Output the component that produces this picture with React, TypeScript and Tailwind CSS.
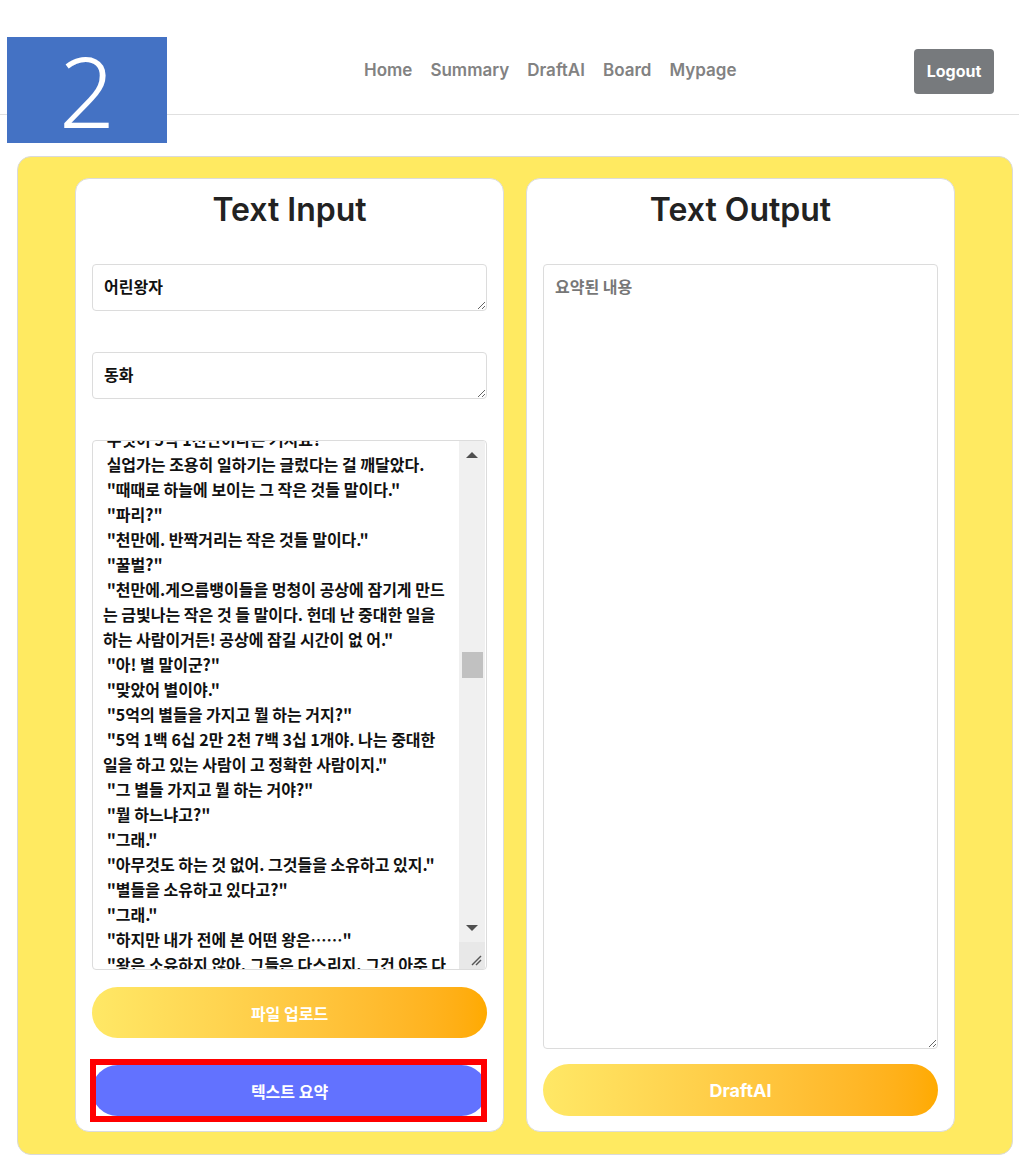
import React from "react";

const lines: string[] = [
  " 무엇이 5억 1천만이라는 거지요?\"",
  " 실업가는 조용히 일하기는 글렀다는 걸 깨달았다.",
  " \"때때로 하늘에 보이는 그 작은 것들 말이다.\"",
  " \"파리?\"",
  " \"천만에. 반짝거리는 작은 것들 말이다.\"",
  " \"꿀벌?\"",
  " \"천만에.게으름뱅이들을 멍청이 공상에 잠기게 만드",
  "는 금빛나는 작은 것 들 말이다. 헌데 난 중대한 일을",
  "하는 사람이거든! 공상에 잠길 시간이 없 어.\"",
  " \"아! 별 말이군?\"",
  " \"맞았어 별이야.\"",
  " \"5억의 별들을 가지고 뭘 하는 거지?\"",
  " \"5억 1백 6십 2만 2천 7백 3십 1개야. 나는 중대한",
  "일을 하고 있는 사람이 고 정확한 사람이지.\"",
  " \"그 별들 가지고 뭘 하는 거야?\"",
  " \"뭘 하느냐고?\"",
  " \"그래.\"",
  " \"아무것도 하는 것 없어. 그것들을 소유하고 있지.\"",
  " \"별들을 소유하고 있다고?\"",
  " \"그래.\"",
  " \"하지만 내가 전에 본 어떤 왕은……\"",
  " \"왕은 소유하지 않아. 그들은 다스리지. 그건 아주 다",
];

function Grip() {
  return (
    <svg width="12" height="12" viewBox="0 0 12 12" className="block">
      <path d="M2 11 L11 2" stroke="#555" strokeWidth="1.4" />
      <path d="M6 11 L11 6" stroke="#555" strokeWidth="1.4" />
    </svg>
  );
}

export default function App() {
  const kr = "font-['Noto_Sans_CJK_KR','Noto_Sans',sans-serif]";
  return (
    <div className="relative min-h-[1162px] w-[1019px] bg-white font-['Inter','Noto_Sans_CJK_KR',sans-serif]">
      <header className="flex h-[115px] items-center border-b border-[#e0e0e0] pt-[27px]">
        <nav className="ml-[364px] flex gap-[18px] text-[17px] font-semibold text-[#828282]">
          <span>Home</span>
          <span>Summary</span>
          <span>DraftAI</span>
          <span>Board</span>
          <span>Mypage</span>
        </nav>
        <button className="ml-auto mr-[25px] mt-[1px] h-[45px] w-[80px] rounded-[4px] bg-[#777a7d] text-[16px] font-bold text-white">
          Logout
        </button>
      </header>

      <div className="absolute left-[7px] top-[37px] flex h-[106px] w-[160px] items-center justify-center bg-[#4472C4] font-['Noto_Sans',sans-serif] text-[98px] font-light leading-none text-white">
        2
      </div>

      <main className="ml-[17px] mt-[41px] flex w-[996px] justify-center gap-[22px] rounded-[14px] border border-[#dadada] bg-[#FFEA61] pb-[22px] pt-[21px]">
        {/* Left card */}
        <section className="flex w-[429px] flex-col rounded-[14px] border border-[#dcdcdc] bg-white px-[16px] pb-[15px] pt-[11px]">
          <h2 className="h-[40px] text-center text-[32px] font-semibold leading-[40px] text-[#222]">Text Input</h2>
          <textarea
            readOnly
            value="어린왕자"
            className={`mt-[34px] h-[47px] w-full rounded-[4px] border border-[#dcdcdc] px-[11px] py-[10px] text-[16px] font-bold leading-[22px] text-[#111] outline-none ${kr}`}
          />
          <textarea
            readOnly
            value="동화"
            className={`mt-[41px] h-[47px] w-full rounded-[4px] border border-[#dcdcdc] px-[11px] py-[10px] text-[16px] font-bold leading-[22px] text-[#111] outline-none ${kr}`}
          />
          <div className="mt-[41px] flex h-[530px] w-full overflow-hidden rounded-[4px] border border-[#dcdcdc] pr-[1px]">
            <div className={`min-w-0 flex-1 overflow-hidden pl-[10px] text-[16px] font-bold leading-[25px] text-[#111] ${kr}`}>
              <div className="-mt-[14px]">
                {lines.map((l, i) => (
                  <div key={i} className="whitespace-pre">
                    {l}
                  </div>
                ))}
              </div>
            </div>
            <div className="flex w-[26px] flex-col bg-[#f0f0f0]">
              <div className="flex h-[28px] items-center justify-center">
                <div className="h-0 w-0 border-x-[6px] border-b-[6px] border-x-transparent border-b-[#505050]" />
              </div>
              <div className="flex-1">
                <div className="mx-auto mt-[183px] h-[26px] w-[21px] bg-[#c1c1c1]" />
              </div>
              <div className="flex h-[28px] items-center justify-center">
                <div className="h-0 w-0 border-x-[6px] border-t-[6px] border-x-transparent border-t-[#505050]" />
              </div>
              <div className="flex h-[27px] items-end justify-end bg-[#e8e8e8] pb-[3px] pr-[3px]">
                <Grip />
              </div>
            </div>
          </div>
          <button className={`mt-[17px] h-[51px] w-full rounded-full bg-gradient-to-r from-[#FFE866] to-[#FFAA00] text-[16px] font-bold text-white ${kr}`}>
            파일 업로드
          </button>
          <button className={`mt-[27px] h-[51px] w-full rounded-full bg-[#6272FF] text-[16px] font-bold text-white ${kr}`}>
            텍스트 요약
          </button>
        </section>

        {/* Right card */}
        <section className="flex w-[429px] flex-col rounded-[14px] border border-[#dcdcdc] bg-white px-[16px] pb-[15px] pt-[11px]">
          <h2 className="h-[40px] text-center text-[32px] font-semibold leading-[40px] text-[#222]">Text Output</h2>
          <textarea
            readOnly
            placeholder="요약된 내용"
            className={`mt-[34px] h-[785px] w-full rounded-[4px] border border-[#dcdcdc] px-[11px] py-[10px] text-[16px] font-bold leading-[22px] text-[#111] outline-none placeholder:text-[#777] ${kr}`}
          />
          <button className="mt-[15px] h-[52px] w-full rounded-full bg-gradient-to-r from-[#FFE866] to-[#FFAA00] text-[18px] font-bold text-white">
            DraftAI
          </button>
        </section>
      </main>

      <div className="pointer-events-none absolute left-[90px] top-[1059px] h-[63px] w-[397px] border-[6px] border-[#FF0000]" />
    </div>
  );
}
